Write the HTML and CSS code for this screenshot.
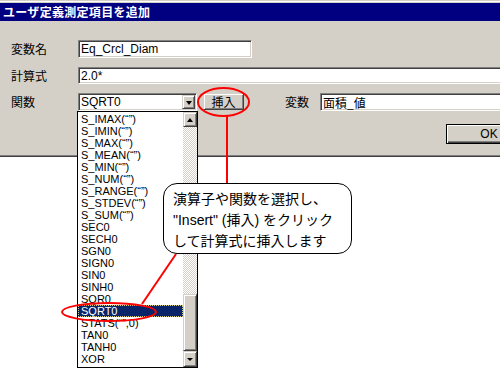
FILE: index.html
```html
<!DOCTYPE html>
<html lang="ja">
<head>
<meta charset="utf-8">
<link rel="stylesheet" href="styles.css">
</head>
<body>
<div class="page">
  <div class="dialog">
    <div class="titlebar">ユーザ定義測定項目を追加</div>
    <div class="dlg-body">
      <div class="row r1">
        <span class="label">変数名</span>
        <div class="field f-name">Eq_Crcl_Diam</div>
      </div>
      <div class="row r2">
        <span class="label">計算式</span>
        <div class="field f-expr">2.0*</div>
      </div>
      <div class="row r3">
        <span class="label">関数</span>
        <div class="field combo">
          <span class="combo-text">SQRT0</span>
          <span class="btn3d dd"><i class="tri tri-down"></i></span>
        </div>
        <button class="btn3d insert">挿入</button>
        <span class="label label2">変数</span>
        <div class="field f-var">面積_値</div>
      </div>
      <div class="row r4">
        <button class="ok">OK</button>
      </div>
    </div>
  </div>

  <div class="listpop">
    <div class="items">
      <div class="item">S_IMAX(“”)</div>
      <div class="item">S_IMIN(“”)</div>
      <div class="item">S_MAX(“”)</div>
      <div class="item">S_MEAN(“”)</div>
      <div class="item">S_MIN(“”)</div>
      <div class="item">S_NUM(“”)</div>
      <div class="item">S_RANGE(“”)</div>
      <div class="item">S_STDEV(“”)</div>
      <div class="item">S_SUM(“”)</div>
      <div class="item">SEC0</div>
      <div class="item">SECH0</div>
      <div class="item">SGN0</div>
      <div class="item">SIGN0</div>
      <div class="item">SIN0</div>
      <div class="item">SINH0</div>
      <div class="item">SQR0</div>
      <div class="item sel">SQRT0</div>
      <div class="item">STATS(“”,0)</div>
      <div class="item">TAN0</div>
      <div class="item">TANH0</div>
      <div class="item">XOR</div>
    </div>
    <div class="vscroll">
      <div class="btn3d sb-btn sb-up"><i class="tri tri-up"></i></div>
      <div class="sb-track"></div>
      <div class="btn3d sb-thumb"></div>
      <div class="btn3d sb-btn sb-down"><i class="tri tri-down-s"></i></div>
    </div>
  </div>

  <svg class="annot" width="500" height="368" viewBox="0 0 500 368">
    <ellipse cx="223.5" cy="102" rx="25.5" ry="14" />
    <line x1="227" y1="116" x2="227" y2="184" />
    <line x1="176" y1="254" x2="142" y2="304" />
    <ellipse cx="109" cy="312" rx="47" ry="9" />
  </svg>

  <div class="callout">演算子や関数を選択し、<br>"Insert" (挿入) をクリック<br>して計算式に挿入します</div>
</div>
</body>
</html>
```

FILE: styles.css
```css
* { box-sizing: border-box; }

html, body {
  margin: 0;
  padding: 0;
  background: #fff;
}

body {
  font-family: "Liberation Sans", "Noto Sans CJK JP", sans-serif;
  font-size: 12px;
  color: #000;
}

.page {
  position: relative;
  width: 500px;
  height: 368px;
  overflow: hidden;
  background: #fff;
}

/* ---------- dialog ---------- */
.dialog {
  width: 560px;
  padding-top: 3px;
  background: linear-gradient(#d4d0c8 0 1px, #fff 1px 2px, #d4d0c8 2px);
  border-bottom: 1px solid #404040;
}

.titlebar {
  height: 18px;
  line-height: 18px;
  padding-left: 3px;
  background: #000080;
  color: #fff;
  font-family: "Noto Sans CJK JP", sans-serif;
  font-weight: bold;
  font-size: 12px;
  letter-spacing: 0.3px;
}

.dlg-body {
  padding: 19px 0 11px;
  border-bottom: 1px solid #808080;
  display: flex;
  flex-direction: column;
}

.row {
  display: flex;
  align-items: center;
}
.r1 { height: 18px; margin-bottom: 9px; }
.r2 { height: 17px; margin-bottom: 9px; }
.r3 { height: 18px; margin-bottom: 13px; }
.r4 { height: 20px; }

.label {
  width: 78px;
  padding-left: 11px;
  font-family: "Noto Sans CJK JP", sans-serif;
  font-size: 12px;
  line-height: 14px;
}
.label2 {
  width: 35px;
  padding-left: 0;
  margin-left: 41px;
}

.field {
  height: 100%;
  background: #fff;
  border: 1px solid;
  border-color: #808080 #fff #fff #808080;
  box-shadow: inset 1px 1px #404040, inset -1px -1px #d4d0c8;
  padding: 0 2px;
  display: flex;
  align-items: center;
  white-space: nowrap;
  font-size: 12px;
}
.f-name { width: 174px; }
.f-expr { width: 470px; }
.f-var { width: 240px; font-family: "Noto Sans CJK JP", sans-serif; }

.combo {
  width: 119px;
  justify-content: space-between;
  padding: 2px 1px 2px 2px;
}
.combo-text { line-height: 14px; }

.btn3d {
  background: #d4d0c8;
  border: 1px solid;
  border-color: #d4d0c8 #404040 #404040 #d4d0c8;
  box-shadow: inset 1px 1px #fff, inset -1px -1px #808080;
}

.dd {
  width: 13px;
  height: 14px;
  display: flex;
  align-items: center;
  justify-content: center;
}

.tri {
  display: block;
  width: 0;
  height: 0;
  border-left: 3px solid transparent;
  border-right: 3px solid transparent;
}
.tri-down { border-top: 4px solid #000; margin-top: 1px; }
.tri-down-s { border-top: 3px solid #000; }
.tri-up { border-bottom: 4px solid #000; }

.insert {
  align-self: flex-start;
  width: 41px;
  height: 17px;
  margin: 0 0 0 6px;
  padding: 0;
  font-family: "Noto Sans CJK JP", sans-serif;
  font-size: 12px;
  line-height: 14px;
  color: #000;
}

.ok {
  width: 86px;
  height: 20px;
  margin: 0 0 0 446px;
  padding: 0;
  background: #d4d0c8;
  border: 1px solid #000;
  box-shadow: inset 1px 1px #fff, inset -1px -1px #404040, inset -2px -2px #808080;
  font-family: "Liberation Sans", sans-serif;
  font-size: 12px;
  color: #000;
}

/* ---------- dropdown list popup ---------- */
.listpop {
  position: absolute;
  left: 77px;
  top: 111px;
  width: 121px;
  height: 257px;
  border: 1px solid #000;
  background: #fff;
  display: flex;
}

.items {
  width: 105px;
  padding-top: 1px;
}

.item {
  height: 12px;
  line-height: 12px;
  padding-left: 3px;
  white-space: nowrap;
  font-family: "Liberation Sans", sans-serif;
  font-size: 11px;
}
.item.sel {
  background: #0a246a;
  color: #fff;
  outline: 1px dotted #d8d080;
  outline-offset: -1px;
}

.vscroll {
  width: 14px;
  display: flex;
  flex-direction: column;
}
.sb-btn {
  display: flex;
  align-items: center;
  justify-content: center;
}
.sb-up { height: 15px; }
.sb-down { height: 16px; }
.sb-track {
  flex: 1;
  background: repeating-conic-gradient(#d4d0c8 0% 25%, #fff 0% 50%) 0 0 / 2px 2px;
}
.sb-thumb { height: 57px; }

/* ---------- annotation overlay ---------- */
.annot {
  position: absolute;
  left: 0;
  top: 0;
  pointer-events: none;
}
.annot ellipse,
.annot line {
  fill: none;
  stroke: #f00;
  stroke-width: 2;
}

.callout {
  position: absolute;
  left: 163px;
  top: 183px;
  width: 189px;
  height: 71px;
  border: 1px solid #000;
  border-radius: 14px;
  background: #fff;
  padding: 5px 0 0 9px;
  font-family: "Liberation Sans", "Noto Sans CJK JP", sans-serif;
  font-size: 14px;
  line-height: 21px;
  white-space: nowrap;
}
```
